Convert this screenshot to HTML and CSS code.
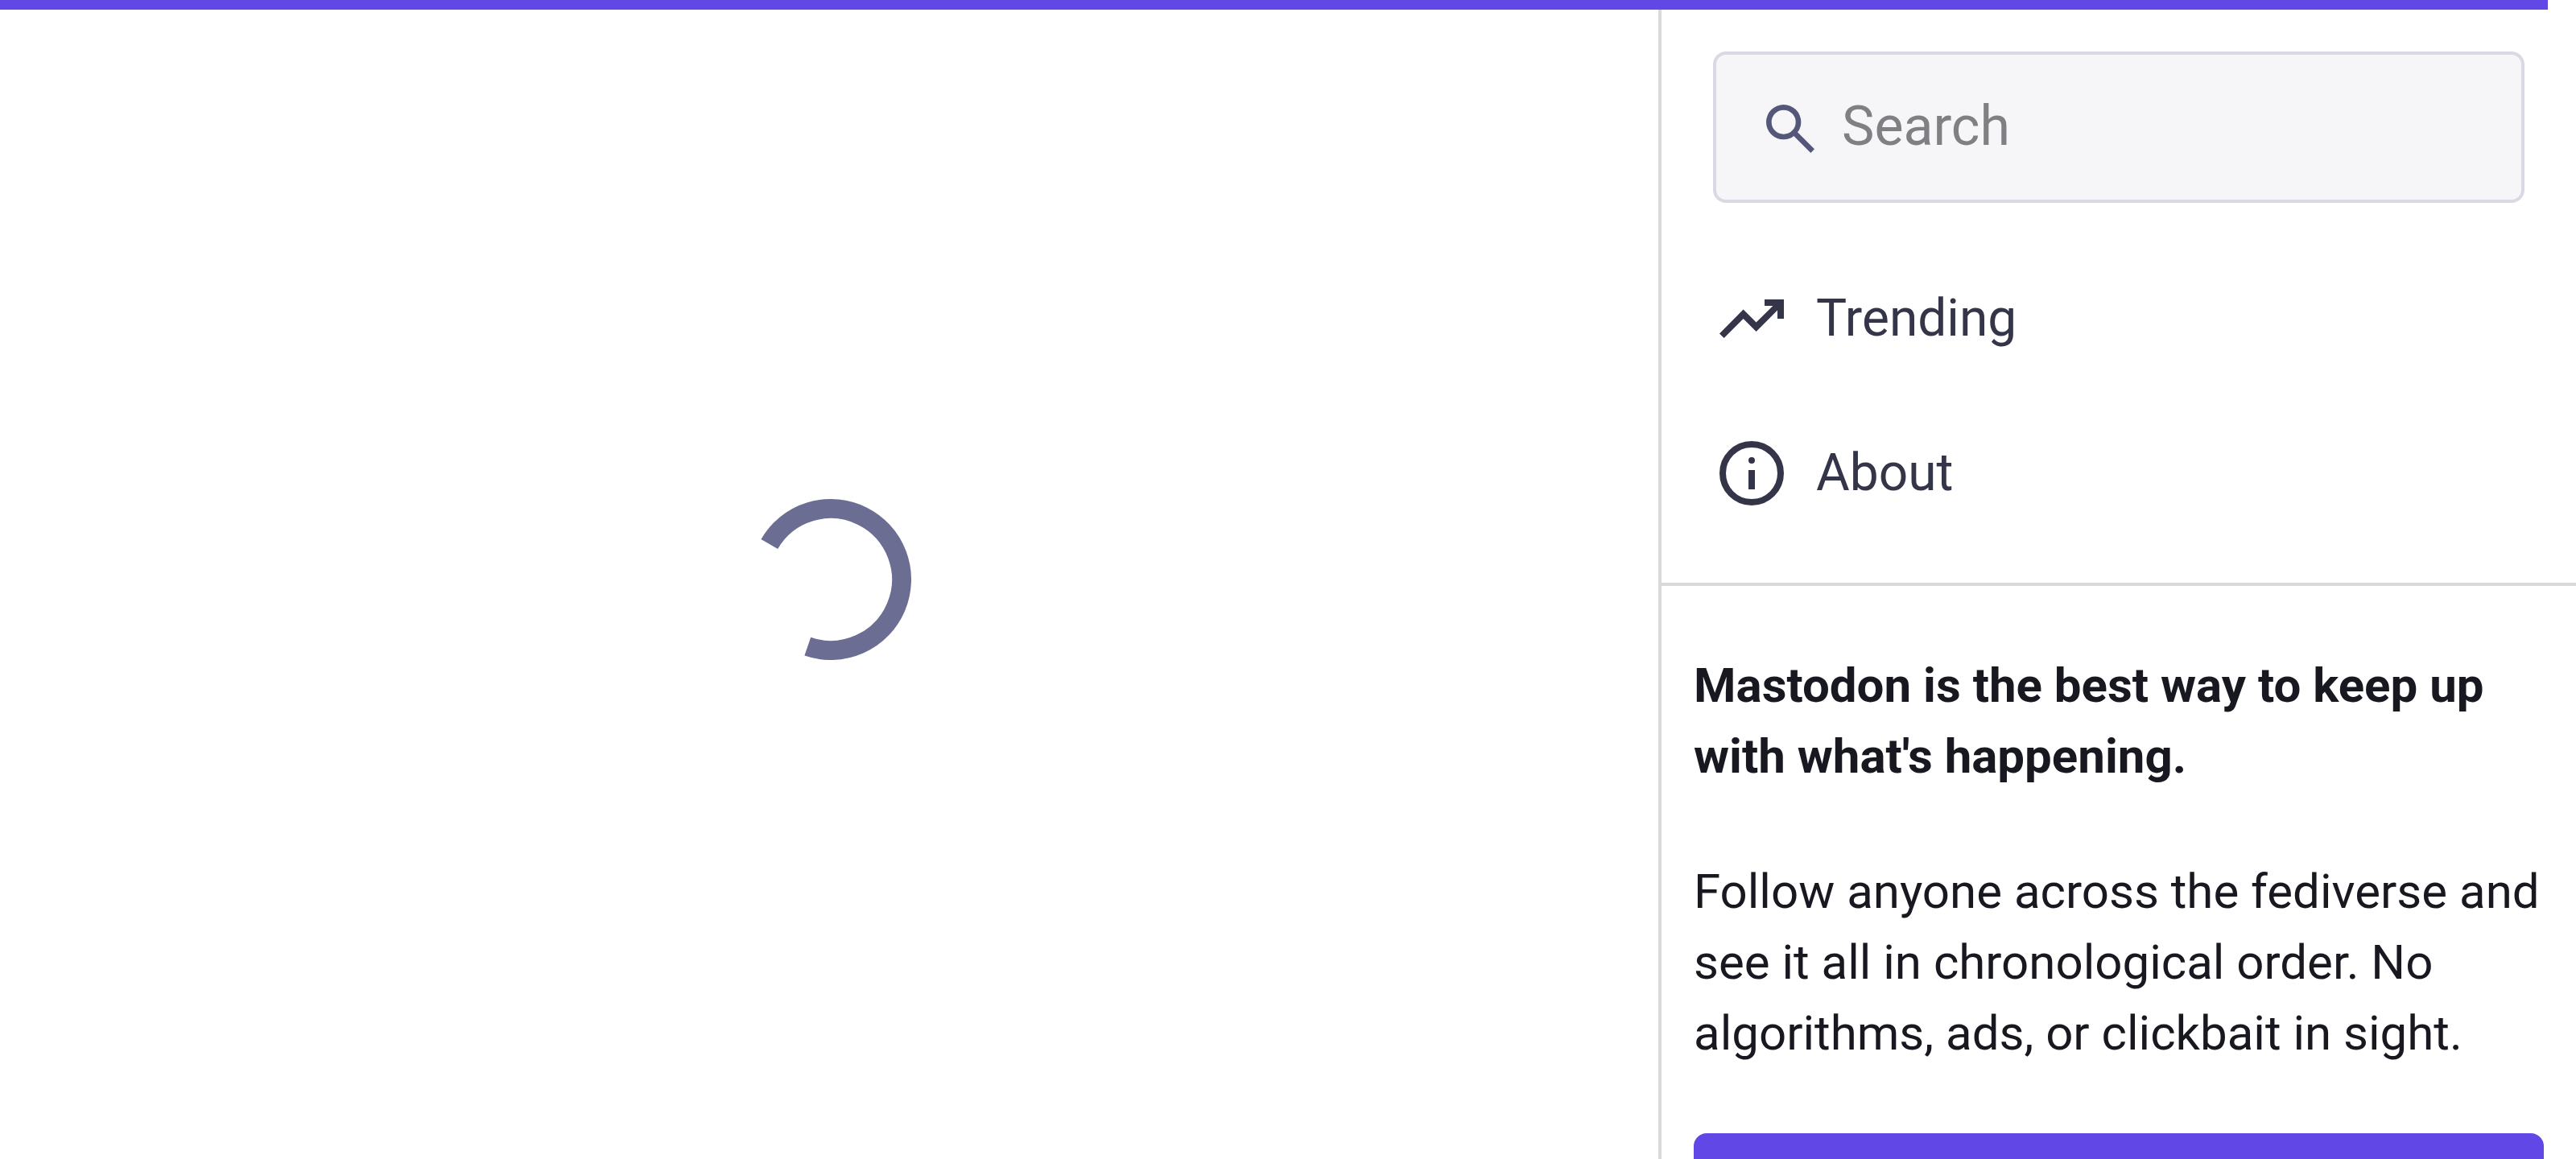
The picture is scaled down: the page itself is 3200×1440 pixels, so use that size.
FILE: index.html
```
<!DOCTYPE html>
<html lang="en">
<head>
    <meta charset="UTF-8">
    <meta name="viewport" content="width=device-width, initial-scale=1.0">
    <title>Mastodon</title>
    <link rel="stylesheet" href="styles.css">
</head>
<body>
    <div class="loading-bar" style="width: 98.9%"></div>
    <div class="layout">
        <main class="content">
            <svg class="spinner" viewBox="0 0 200 200" role="img" aria-label="Loading">
                <path d="M23.8 56A88 88 0 1 1 71.3 183.2" fill="none" stroke="currentColor" stroke-width="24"/>
            </svg>
        </main>
        <aside class="sidebar">
            <div class="sidebar-top">
                <form class="search">
                    <label for="search" aria-label="Search">
                        <svg class="search-icon" viewBox="0 0 24 24">
                            <path d="m19.6 21-6.3-6.3a6.1 6.1 0 0 1-3.8 1.3 6.5 6.5 0 1 1 6.5-6.5 6.1 6.1 0 0 1-1.3 3.8l6.3 6.3-1.4 1.4ZM9.5 14a4.5 4.5 0 1 0 0-9 4.5 4.5 0 0 0 0 9Z"/>
                        </svg>
                    </label>
                    <input id="search" type="text" placeholder="Search">
                </form>
                <nav class="nav">
                    <a href="#trending">
                        <svg class="nav-icon" viewBox="0 0 24 24">
                            <path d="M3.4 18 2 16.6l7.4-7.45 4 4L18.6 8H16V6h6v6h-2V9.4L13.4 16l-4-4-6 6Z"/>
                        </svg>
                        <span>Trending</span>
                    </a>
                    <a href="#about">
                        <svg class="nav-icon" viewBox="0 0 24 24">
                            <circle cx="12" cy="12" r="9" fill="none" stroke="currentColor" stroke-width="2"/>
                            <circle cx="12" cy="8" r="1"/>
                            <path d="M11 11h2v6h-2z"/>
                        </svg>
                        <span>About</span>
                    </a>
                </nav>
            </div>
            <section class="sign-in">
                <p><strong>Mastodon is the best way to keep up with what's happening.</strong></p>
                <p>Follow anyone across the fediverse and see it all in chronological order. No algorithms, ads, or clickbait in sight.</p>
                <button class="button" type="button" aria-label="Create account"></button>
            </section>
        </aside>
    </div>
</body>
</html>
```

FILE: styles.css
```
* {
    box-sizing: border-box;
}
body {
    margin: 0;
    font-family: Roboto, sans-serif;
    background: #fff;
    color: #181820;
}
.loading-bar {
    position: absolute;
    top: 0;
    left: 0;
    height: 12px;
    background: #6147e6;
}
.layout {
    display: grid;
    grid-template-columns: 1fr 1136px;
    grid-template-rows: 100%;
    height: 100vh;
    overflow: hidden;
}
.content {
    display: flex;
    align-items: center;
    justify-content: center;
    box-shadow: inset -4px 0 #d9d9da;
}
.spinner {
    width: 200px;
    height: 200px;
    color: #6b6d93;
}
.sidebar-top {
    padding: 64px 64px 40px;
    border-bottom: 4px solid #d9d9da;
}
.search {
    display: flex;
    align-items: flex-start;
    gap: 24px;
    height: 188px;
    padding: 52px;
    background: #f6f6f9;
    border: 4px solid #d9d9e3;
    border-radius: 16px;
}
.search label {
    display: flex;
}
.search-icon {
    width: 80px;
    height: 80px;
    fill: #545778;
}
.search input {
    flex: 1;
    min-width: 0;
    height: 74px;
    padding: 0;
    border: 0;
    outline: 0;
    background: none;
    font-family: inherit;
    font-size: 68px;
}
.search input::placeholder {
    color: #808084;
}
.nav {
    margin-top: 48px;
}
.nav a {
    display: flex;
    align-items: center;
    gap: 32px;
    padding: 48px 0;
    color: #353549;
    font-size: 64px;
    line-height: 96px;
    text-decoration: none;
}
.nav-icon {
    width: 96px;
    height: 96px;
    fill: currentColor;
}
.sign-in {
    padding: 80px 40px;
    font-size: 60px;
    line-height: 88px;
}
.sign-in p {
    margin: 0 0 80px;
}
.button {
    display: block;
    width: 100%;
    height: 144px;
    border: 0;
    border-radius: 16px;
    background: #6147e6;
}
```
